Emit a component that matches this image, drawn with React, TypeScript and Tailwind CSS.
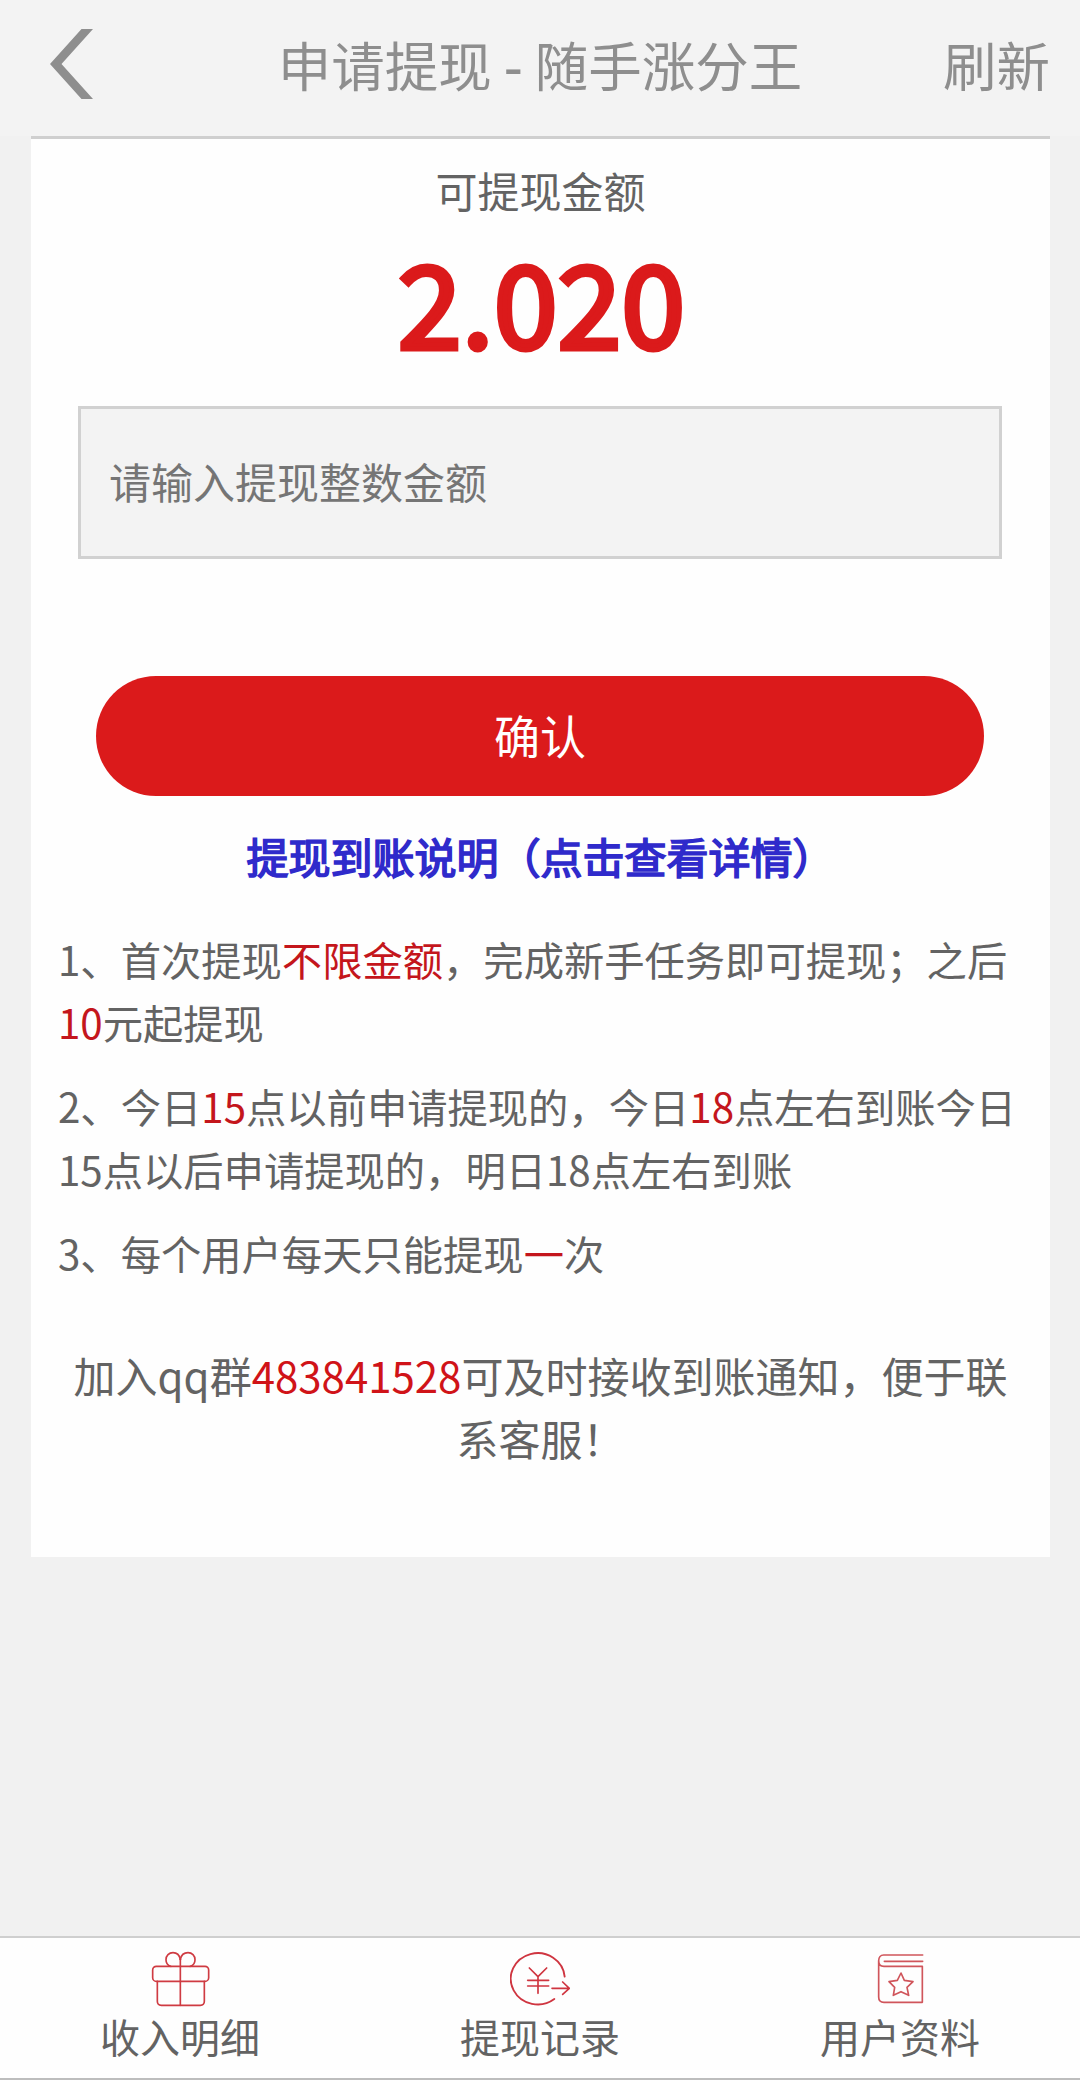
import { useState } from "react";
import type { ReactNode } from "react";

function Hot({ children }: { children: ReactNode }) {
  return <span className="text-[#c4161c]">{children}</span>;
}

function BackIcon() {
  return (
    <svg viewBox="0 0 43 70" className="h-[70px] w-[43px]" fill="#8e8e8e">
      <path d="M31.5 0H43L11.5 35L43 70H31.5L0 35Z" />
    </svg>
  );
}

const iconProps = {
  viewBox: "0 0 180 174",
  className: "h-[58px] w-[60px]",
  fill: "none",
  strokeWidth: 5,
  strokeLinecap: "round" as const,
  strokeLinejoin: "round" as const,
};

function GiftIcon() {
  return (
    <svg {...iconProps} stroke="#cf3b42">
      <rect x="8" y="49" width="168" height="45" rx="11" />
      <path d="M22 94V154Q22 166 34 166H151Q163 166 163 154V94" />
      <path d="M91 166V28" />
      <path d="M91 28C88 14 79 8 69 8C57 8 48 17 48 29C48 39 54 46 62 49" />
      <path d="M91 28C94 14 103 8 114 8C126 8 135 17 135 29C135 39 129 46 121 49" />
    </svg>
  );
}

function YenIcon() {
  return (
    <svg {...iconProps} stroke="#cf3540">
      <path d="M164 80A81 77 0 1 0 133 147" strokeWidth="5.5" />
      <path d="M58 54L84 80L110 54M84 80V130M53 91H116M53 108H116" />
      <path d="M126 115H177M158 96L178 115L158 133" />
    </svg>
  );
}

function BookIcon() {
  return (
    <svg {...iconProps} stroke="#d0555b">
      <path d="M158 15H41C31 15 26 23 26 32C26 42 32 49 42 49H157V157H42Q26 157 26 141V32" />
      <path d="M158 34H43" />
      <path d="M93 69L103 91L129 95L111 112L116 136L93 125L70 136L74 112L57 95L82 91Z" />
    </svg>
  );
}

const tabs = [
  { label: "收入明细", icon: <GiftIcon /> },
  { label: "提现记录", icon: <YenIcon /> },
  { label: "用户资料", icon: <BookIcon /> },
];

export default function App() {
  const [amount, setAmount] = useState("");

  return (
    <div className="flex h-[2080px] w-[1080px] flex-col bg-[#f1f1f1] font-['Noto_Sans_CJK_SC',sans-serif] text-[#636363]">
      <header className="grid h-[136px] shrink-0 grid-cols-[251px_1fr_251px] items-center bg-[#f3f3f3] pb-2 text-[53.5px] leading-[64px] text-[#8e8e8e]">
        <button type="button" className="pl-[50px]" aria-label="返回">
          <BackIcon />
        </button>
        <h1 className="whitespace-nowrap text-center">
          申请提现 <span className="font-medium">-</span> 随手涨分王
        </h1>
        <button type="button" className="pr-[30px] text-right">
          刷新
        </button>
      </header>

      <main className="mr-[30px] ml-[31px] flex h-[1421px] shrink-0 flex-col border-t-3 border-[#cfcfcf] bg-[#fefefe] pt-[19px]">
        <p className="text-center text-[42px] leading-[63px]">可提现金额</p>
        {/* regular weight thickened with a stroke keeps the digits narrow */}
        <p className="h-[185px] pl-0.5 text-center text-[115px] leading-[156px] text-[#db1a1b] [-webkit-text-stroke:5px_#db1a1b]">
          2.020
        </p>

        <input
          className="mr-12 ml-[47px] h-[153px] shrink-0 border-3 border-[#d1d1d1] bg-[#f3f3f3] px-7 pb-[5px] text-[42px] outline-none placeholder:text-[#757575]"
          placeholder="请输入提现整数金额"
          value={amount}
          onChange={(e) => setAmount(e.target.value)}
        />

        <button
          type="button"
          className="mr-[66px] ml-[65px] mt-[117px] h-[120px] shrink-0 rounded-full bg-[#db1a1b] pb-[3px] text-[46px] text-white"
        >
          确认
        </button>

        <a className="mt-7 block text-center text-[42px] leading-[63px] text-[#2f2acb] [-webkit-text-stroke:1.7px_#2f2acb]">
          提现到账说明（点击查看详情）
        </a>

        <div className="mt-10 flex flex-col gap-[21px] pl-[27px] text-[40.3px] leading-[63px] whitespace-nowrap">
          <p>
            1、首次提现<Hot>不限金额</Hot>，完成新手任务即可提现；之后
            <br />
            <Hot>10</Hot>元起提现
          </p>
          <p>
            2、今日<Hot>15</Hot>点以前申请提现的，今日<Hot>18</Hot>点左右到账今日
            <br />
            15点以后申请提现的，明日18点左右到账
          </p>
          <p>
            3、每个用户每天只能提现<Hot>一</Hot>次
          </p>
        </div>

        <p className="mt-[59px] text-center text-[42px] leading-[63px] whitespace-nowrap">
          加入qq群<span className="text-[#d01318]">483841528</span>可及时接收到账通知，便于联
          <br />
          系客服！
        </p>
      </main>

      <nav className="mt-auto grid h-[144px] grid-cols-3 border-y-2 border-t-[#cfcfcf] border-b-[#bdbdbd] bg-[#fefefe] text-[40px] leading-[56px]">
        {tabs.map((t) => (
          <button key={t.label} type="button" className="flex flex-col items-center pt-3">
            {t.icon}
            <span>{t.label}</span>
          </button>
        ))}
      </nav>
    </div>
  );
}
